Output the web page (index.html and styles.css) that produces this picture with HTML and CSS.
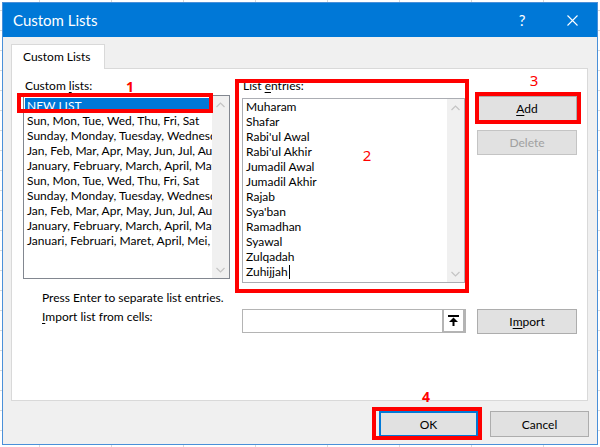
FILE: index.html
```html
<!DOCTYPE html>
<html lang="en">
<head>
<meta charset="utf-8">
<title>Custom Lists</title>
<link rel="stylesheet" href="styles.css">
</head>
<body>
<div class="screen">
  <div class="dialog">
    <div class="titlebar">
      <span class="title">Custom Lists</span>
      <span class="help">?</span>
      <span class="close">
        <svg width="11" height="11" viewBox="0 0 11 11"><path d="M0.5 0.5 L10.5 10.5 M10.5 0.5 L0.5 10.5" stroke="#fff" stroke-width="1.1" fill="none"/></svg>
      </span>
    </div>
    <div class="body">
      <div class="tabs"><div class="tab">Custom Lists</div></div>
      <div class="panel">
        <div class="lists">
          <div class="col">
            <div class="label label-lists">Custom <u>l</u>ists:</div>
            <div class="listbox">
              <div class="items">
                <div class="item selected">NEW LIST</div>
                <div class="item">Sun, Mon, Tue, Wed, Thu, Fri, Sat</div>
                <div class="item">Sunday, Monday, Tuesday, Wednesday, Thursday, Friday, Saturday</div>
                <div class="item">Jan, Feb, Mar, Apr, May, Jun, Jul, Aug, Sep, Oct, Nov, Dec</div>
                <div class="item">January, February, March, April, May, June, July</div>
                <div class="item">Sun, Mon, Tue, Wed, Thu, Fri, Sat</div>
                <div class="item">Sunday, Monday, Tuesday, Wednesday, Thursday, Friday, Saturday</div>
                <div class="item">Jan, Feb, Mar, Apr, May, Jun, Jul, Aug, Sep, Oct, Nov, Dec</div>
                <div class="item">January, February, March, April, May, June, July</div>
                <div class="item">Januari, Februari, Maret, April, Mei, Juni, Juli</div>
              </div>
              <div class="scrollbar">
                <span class="arrow"><svg width="9" height="6" viewBox="0 0 9 6"><path d="M0.5 5 L4.5 1 L8.5 5" stroke="#c4c4c4" stroke-width="1.2" fill="none"/></svg></span>
                <span class="arrow"><svg width="9" height="6" viewBox="0 0 9 6"><path d="M0.5 1 L4.5 5 L8.5 1" stroke="#c4c4c4" stroke-width="1.2" fill="none"/></svg></span>
              </div>
            </div>
          </div>
          <div class="col">
            <div class="label label-entries">List <u>e</u>ntries:</div>
            <div class="textbox">
              <div class="entries">
                <div class="entry">Muharam</div>
                <div class="entry">Shafar</div>
                <div class="entry">Rabi'ul Awal</div>
                <div class="entry">Rabi'ul Akhir</div>
                <div class="entry">Jumadil Awal</div>
                <div class="entry">Jumadil Akhir</div>
                <div class="entry">Rajab</div>
                <div class="entry">Sya'ban</div>
                <div class="entry">Ramadhan</div>
                <div class="entry">Syawal</div>
                <div class="entry">Zulqadah</div>
                <div class="entry">Zuhijjah<span class="caret"></span></div>
              </div>
              <div class="scrollbar">
                <span class="arrow"><svg width="9" height="6" viewBox="0 0 9 6"><path d="M0.5 5 L4.5 1 L8.5 5" stroke="#c4c4c4" stroke-width="1.2" fill="none"/></svg></span>
                <span class="arrow"><svg width="9" height="6" viewBox="0 0 9 6"><path d="M0.5 1 L4.5 5 L8.5 1" stroke="#c4c4c4" stroke-width="1.2" fill="none"/></svg></span>
              </div>
            </div>
          </div>
          <div class="col buttons">
            <button class="btn" type="button"><u>A</u>dd</button>
            <button class="btn disabled" type="button">Delete</button>
          </div>
        </div>
        <p class="hint">Press Enter to separate list entries.</p>
        <div class="import-row">
          <div class="import-label"><u>I</u>mport list from cells:</div>
          <div class="import-input">
            <span class="picker">
              <svg width="11" height="11" viewBox="0 0 11 11"><rect x="0" y="0" width="11" height="2" fill="#000"/><path d="M5.5 2.5 L1 7 L10 7 Z" fill="#000"/><rect x="4.5" y="6" width="2" height="5" fill="#000"/></svg>
            </span>
          </div>
          <button class="btn" type="button">I<u>m</u>port</button>
        </div>
      </div>
      <div class="footer">
        <button class="btn ok" type="button">OK</button>
        <button class="btn cancel" type="button">Cancel</button>
      </div>
    </div>
  </div>
  <div class="mark mark-1"></div>
  <div class="mark mark-2"></div>
  <div class="mark mark-3"></div>
  <div class="mark mark-4"></div>
  <span class="num num-1">1</span>
  <span class="num num-2">2</span>
  <span class="num num-3">3</span>
  <span class="num num-4">4</span>
</div>
</body>
</html>
```
FILE: styles.css
```css
* { box-sizing: border-box; }
html, body { margin: 0; padding: 0; }
body {
  width: 600px;
  height: 447px;
  overflow: hidden;
  background-color: #fff;
  background-image:
    linear-gradient(to right, #d9d9d9 1px, transparent 1px),
    linear-gradient(to bottom, #d9d9d9 1px, transparent 1px);
  background-size: 72px 20px;
  background-position: 39px 10px;
  font-family: Lato, "Noto Sans", sans-serif;
  font-size: 12px;
  color: #000;
}
u { text-underline-offset: 2px; text-decoration-thickness: 1px; }
.screen { position: relative; width: 600px; height: 447px; padding: 2px 0 0 2px; }
.dialog {
  width: 596px;
  height: 443px;
  border: 1px solid #4a90d9;
  background: #f0f0f0;
  display: flex;
  flex-direction: column;
}
.titlebar {
  height: 34px;
  flex: none;
  background: #0078d7;
  color: #fff;
  display: flex;
  align-items: center;
  padding: 0 2px 0 10px;
}
.title { font-size: 15px; flex: 1; }
.help, .close { width: 46px; height: 100%; display: flex; align-items: center; justify-content: center; }
.help { font-size: 15px; margin-right: 4px; }
.body { flex: 1; padding: 7px 8px 0 8px; display: flex; flex-direction: column; }
.tabs { height: 24px; display: flex; flex: none; }
.tab {
  width: 94px;
  height: 25px;
  border: 1px solid #d9d9d9;
  border-bottom: none;
  background: #fff;
  padding-left: 11px;
  line-height: 24px;
  position: relative;
  z-index: 1;
}
.panel {
  width: 577px;
  height: 333px;
  flex: none;
  border: 1px solid #d9d9d9;
  background: #fff;
  padding: 9px 0 0 11px;
}
.lists { display: grid; grid-template-columns: 207px 223px 100px; column-gap: 12px; align-items: start; }
.label { line-height: 16px; height: 16px; white-space: nowrap; }
.label-lists { padding-left: 2px; }
.label-entries { padding-left: 1px; }
.listbox { margin-top: 1px; height: 184px; border: 1px solid #828790; display: flex; }
.items { flex: 1; min-width: 0; overflow: hidden; padding-top: 2px; }
.item { line-height: 15px; height: 15px; margin-left: 1px; padding-left: 2px; white-space: nowrap; overflow: hidden; }
.item.selected { background: #0078d7; color: #fff; }
.scrollbar { width: 17px; flex: none; background: #f0f0f0; display: flex; flex-direction: column; justify-content: space-between; }
.arrow { height: 17px; display: flex; align-items: center; justify-content: center; }
.textbox { margin-top: 4px; height: 185px; border: 1px solid #abadb3; display: flex; }
.entries { flex: 1; padding-left: 3px; }
.entry { line-height: 15px; height: 15px; white-space: nowrap; }
.caret { display: inline-block; width: 1px; height: 14px; background: #000; vertical-align: -3px; margin-left: 1px; }
.buttons { display: flex; flex-direction: column; gap: 9px; padding-top: 18px; }
.btn {
  height: 25px;
  width: 100px;
  border: 1px solid #adadad;
  background: #e1e1e1;
  font: inherit;
  color: #000;
  padding: 0;
  display: flex;
  align-items: center;
  justify-content: center;
}
.btn.disabled { border-color: #c4c4c4; color: #a0a0a0; }
.hint { margin: 7px 0 0 19px; line-height: 16px; height: 16px; }
.import-row { margin-top: 3px; display: grid; grid-template-columns: 207px 223px 100px; column-gap: 12px; align-items: start; }
.import-label { padding-left: 19px; line-height: 16px; white-space: nowrap; }
.import-input {
  width: 224px;
  height: 24px;
  border: 1px solid #b4b4b4;
  background: #fff;
  display: flex;
  justify-content: flex-end;
}
.picker {
  width: 23px;
  height: 100%;
  border-left: 2px solid #b4b4b4;
  border-right: 2px solid #b4b4b4;
  border-bottom: 1px solid #b4b4b4;
  display: flex;
  align-items: center;
  justify-content: center;
  background: #fff;
}
.footer { display: flex; justify-content: flex-end; gap: 12px; margin-top: 10px; }
.footer .btn { width: 99px; height: 26px; }
.btn.ok { border: 2px solid #0078d7; }
.mark { position: absolute; border: 4px solid #ff0000; }
.mark-1 { left: 17px; top: 93px; width: 196px; height: 20px; }
.mark-2 { left: 235px; top: 79px; width: 234px; height: 214px; }
.mark-3 { left: 475px; top: 92px; width: 106px; height: 32px; }
.mark-4 { left: 372px; top: 407px; width: 110px; height: 33px; }
.num { position: absolute; width: 20px; text-align: center; color: #ff0000; font-family: "Noto Sans", sans-serif; line-height: 1; }
.num-1 { left: 120px; top: 80px; font-size: 14px; font-weight: bold; }
.num-2 { left: 357px; top: 148px; font-size: 15px; }
.num-3 { left: 524px; top: 73px; font-size: 15px; }
.num-4 { left: 416px; top: 390px; font-size: 14px; font-weight: bold; }
```
